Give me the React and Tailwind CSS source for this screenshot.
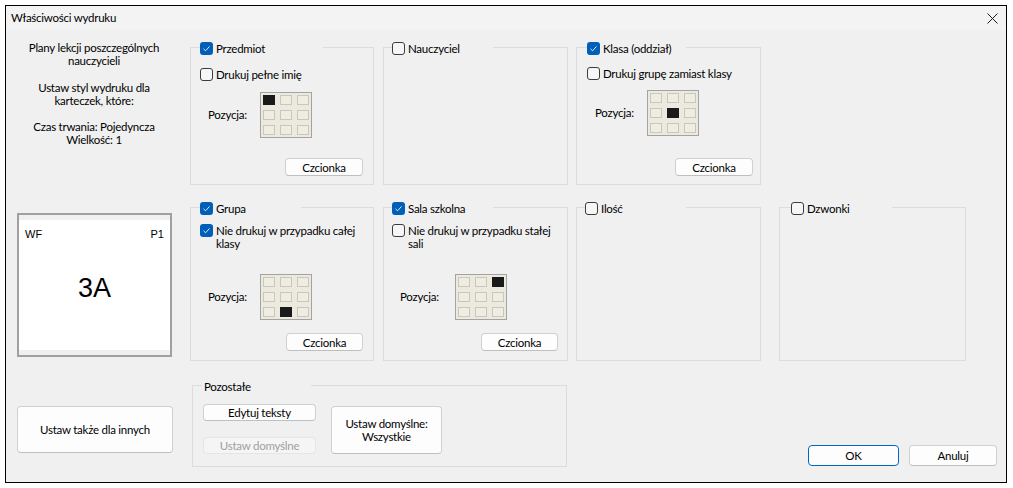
// Okno "Właściwości wydruku" — ustawienia karteczek planu lekcji
import React from "react";

// ── pole wyboru w stylu Windows 11
function Check({ on }) {
  if (on) {
    return (
      <span className="w-[13px] h-[13px] shrink-0 rounded-[3px] bg-[#005fb8] flex items-center justify-center">
        <svg width="9" height="9" viewBox="0 0 9 9" fill="none" stroke="#dfe9f5" strokeWidth="1">
          <path d="M1.5 4.8 L3.6 6.8 L7.5 2.4" />
        </svg>
      </span>
    );
  }
  return <span className="w-[13px] h-[13px] shrink-0 rounded-[3px] border border-[#3c3c3c] bg-[#f6f6f6]" />;
}

// ── siatka pozycji 3x3
function PosGrid({ active }) {
  return (
    <div className="w-[52px] h-[46px] border border-[#a3a3a3] bg-[#ece9de] p-[2px] grid grid-cols-[12px_12px_12px] grid-rows-[10px_10px_10px] gap-[5px]">
      {Array.from({ length: 9 }).map((_, i) => (
        <span
          key={i}
          className={i === active ? "bg-[#1a1a1a]" : "border border-[#c9c6bc] bg-[#efece2]"}
        />
      ))}
    </div>
  );
}

function Btn({ children, className = "" }) {
  return (
    <div className={`flex items-center justify-center text-center bg-[#fdfdfd] border border-[#d0d0d0] border-b-[#bfbfbf] rounded-[4px] leading-[13px] ${className}`}>
      {children}
    </div>
  );
}

// ── ramka z legendą nachodzącą na górną krawędź
function GroupBox({ className, legendClass, legend, children }) {
  return (
    <div className={`relative shrink-0 border border-[#dcdcdc] ${className}`}>
      <div className={`absolute -top-[8px] h-[16px] bg-[#f0f0f0] flex items-center ${legendClass}`}>
        {legend}
      </div>
      {children}
    </div>
  );
}

function Legend({ on, label }) {
  return (
    <>
      <Check on={on} />
      <span className="ml-[3px] leading-[13px]">{label}</span>
    </>
  );
}

export default function App() {
  return (
    <div className="w-[1013px] h-[488px] bg-white pt-[5px] pl-[5px] font-['Lato',sans-serif] text-[11.5px] tracking-[-0.25px] text-black">
      <div className="w-[1002px] h-[478px] border border-black bg-[#f0f0f0] flex flex-col">
        {/* pasek tytułu */}
        <div className="h-[24px] bg-[#f3f3f3] flex items-center pl-[5px] pr-[8px] shrink-0">
          <span className="leading-[14px]">Właściwości wydruku</span>
          <svg className="ml-auto" width="11" height="11" viewBox="0 0 11 11" stroke="#1a1a1a" strokeWidth="1">
            <path d="M0.5 0.5 L10.5 10.5 M10.5 0.5 L0.5 10.5" />
          </svg>
        </div>

        <div className="flex flex-1">
          {/* lewa kolumna */}
          <div className="w-[184px] shrink-0 pl-[11px] flex flex-col">
            <div className="w-[154px] text-center leading-[13px] mt-[11px]">
              Plany lekcji poszczególnych<br />nauczycieli
            </div>
            <div className="w-[154px] text-center leading-[13px] mt-[14px]">
              Ustaw styl wydruku dla<br />karteczek, które:
            </div>
            <div className="w-[154px] text-center leading-[13px] mt-[13px]">
              Czas trwania: Pojedyncza<br />Wielkość: 1
            </div>

            {/* podgląd karteczki */}
            <div className="mt-[67px] w-[155px] h-[144px] border-2 border-[#a0a0a0] bg-white flex flex-col tracking-normal font-['Liberation_Sans',Arial,sans-serif]">
              <div className="h-[5px] bg-[#f0f0f0]" />
              <div className="flex justify-between px-[6px] mt-[8px] text-[11px] leading-[12px]">
                <span>WF</span>
                <span>P1</span>
              </div>
              <div className="flex-1 flex items-center justify-center text-[27px] leading-[30px] pb-[14px]">
                3A
              </div>
              <div className="h-[5px] bg-[#f0f0f0]" />
            </div>

            <Btn className="mt-[49px] w-[156px] h-[47px]">Ustaw także dla innych</Btn>
          </div>

          {/* prawa część */}
          <div className="flex flex-col">
            {/* rząd 1 */}
            <div className="flex mt-[17px]">
              <GroupBox
                className="w-[184px] h-[138px]"
                legendClass="left-[9px] w-[123px]"
                legend={<Legend on label="Przedmiot" />}
              >
                <div className="flex items-center pl-[9px] mt-[20px]">
                  <Check />
                  <span className="ml-[3px] leading-[13px]">Drukuj pełne imię</span>
                </div>
                <div className="flex items-center ml-[17px] mt-[11px]">
                  <span className="w-[52px]">Pozycja:</span>
                  <PosGrid active={0} />
                </div>
                <Btn className="ml-[94px] mt-[20px] w-[78px] h-[18px]">Czcionka</Btn>
              </GroupBox>

              <GroupBox
                className="ml-[9px] w-[185px] h-[138px]"
                legendClass="left-[8px] w-[101px]"
                legend={<Legend label="Nauczyciel" />}
              />

              <GroupBox
                className="ml-[8px] w-[185px] h-[138px]"
                legendClass="left-[10px] w-[99px]"
                legend={<Legend on label="Klasa (oddział)" />}
              >
                <div className="flex items-center pl-[10px] mt-[19px]">
                  <Check />
                  <span className="ml-[3px] leading-[13px]">Drukuj grupę zamiast klasy</span>
                </div>
                <div className="flex items-center ml-[18px] mt-[10px]">
                  <span className="w-[52px]">Pozycja:</span>
                  <PosGrid active={4} />
                </div>
                <Btn className="ml-[98px] mt-[22px] w-[78px] h-[18px]">Czcionka</Btn>
              </GroupBox>
            </div>

            {/* rząd 2 */}
            <div className="flex mt-[22px]">
              <GroupBox
                className="w-[184px] h-[154px]"
                legendClass="left-[9px] w-[101px]"
                legend={<Legend on label="Grupa" />}
              >
                <div className="flex items-start pl-[9px] mt-[16px]">
                  <Check on />
                  <span className="ml-[3px] leading-[13px]">
                    Nie drukuj w przypadku całej<br />klasy
                  </span>
                </div>
                <div className="flex items-center ml-[17px] mt-[24px]">
                  <span className="w-[52px]">Pozycja:</span>
                  <PosGrid active={7} />
                </div>
                <Btn className="ml-[95px] mt-[13px] w-[77px] h-[18px]">Czcionka</Btn>
              </GroupBox>

              <GroupBox
                className="ml-[9px] w-[185px] h-[154px]"
                legendClass="left-[8px] w-[101px]"
                legend={<Legend on label="Sala szkolna" />}
              >
                <div className="flex items-start pl-[8px] mt-[16px]">
                  <Check />
                  <span className="ml-[3px] leading-[13px]">
                    Nie drukuj w przypadku stałej<br />sali
                  </span>
                </div>
                <div className="flex items-center ml-[16px] mt-[24px]">
                  <span className="w-[55px]">Pozycja:</span>
                  <PosGrid active={2} />
                </div>
                <Btn className="ml-[97px] mt-[13px] w-[77px] h-[18px]">Czcionka</Btn>
              </GroupBox>

              <GroupBox
                className="ml-[8px] w-[185px] h-[154px]"
                legendClass="left-[8px] w-[101px]"
                legend={<Legend label="Ilość" />}
              />

              <GroupBox
                className="ml-[18px] w-[187px] h-[154px]"
                legendClass="left-[11px] w-[101px]"
                legend={<Legend label="Dzwonki" />}
              />
            </div>

            {/* rząd 3 */}
            <div className="flex items-end mt-[24px]">
              <GroupBox
                className="ml-[2px] w-[375px] h-[82px]"
                legendClass="left-[9px] w-[109px] pl-[2px]"
                legend={<span className="leading-[13px]">Pozostałe</span>}
              >
                <div className="flex items-start ml-[10px]">
                  <div className="flex flex-col">
                    <Btn className="mt-[18px] w-[113px] h-[17px]">Edytuj teksty</Btn>
                    <div className="mt-[16px] w-[113px] h-[17px] flex items-center justify-center bg-[#f5f5f5] border border-[#e5e5e5] rounded-[4px] text-[#a0a0a0] leading-[13px]">
                      Ustaw domyślne
                    </div>
                  </div>
                  <Btn className="ml-[15px] mt-[20px] w-[111px] h-[48px]">
                    Ustaw domyślne:<br />Wszystkie
                  </Btn>
                </div>
              </GroupBox>

              <div className="ml-[241px] flex mb-[1px]">
                <div className="w-[91px] h-[21px] flex items-center justify-center bg-[#fdfdfd] border border-[#0067c0] rounded-[4px] leading-[13px]">
                  OK
                </div>
                <Btn className="ml-[10px] w-[88px] h-[21px]">Anuluj</Btn>
              </div>
            </div>
          </div>
        </div>
      </div>
    </div>
  );
}
